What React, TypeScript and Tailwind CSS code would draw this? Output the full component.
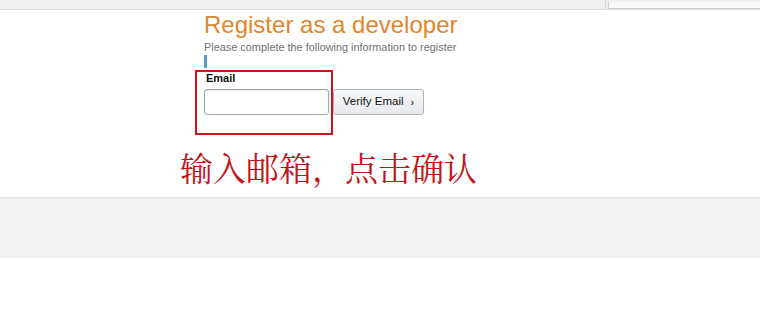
export default function App() {
  return (
    <div className="relative h-[331px] w-[760px] overflow-hidden bg-white font-['Liberation_Sans',Arial,sans-serif]">
      {/* browser-ish top strip */}
      <div className="flex h-[10px] items-end border-b border-[#dcdcdc] bg-[#efefee]">
        <div className="flex-1" />
        <div className="h-[9px] w-[6px] border-r border-[#d6d6d6]" />
        <div className="ml-[2px] h-[7px] w-[152px] border-l border-b border-[#d0d0d0] bg-[#f7f7f7]" />
      </div>

      <main className="pl-[204px] pt-[1px]">
        <h1 className="text-[24px] leading-[28px] text-[#e0862c]">Register as a developer</h1>
        <p className="mt-[2px] text-[10.9px] leading-[13px] text-[#6f6f6f]">
          Please complete the following information to register
        </p>
        <div className="mt-[1px] h-[13px] w-[3px] bg-[#5b9bd3]" />

        <form className="mt-[4px]">
          <label className="block pl-[2px] text-[11px] font-bold leading-[13px] text-[#111111]">Email</label>
          <div className="mt-[4px] flex items-center gap-[4px]">
            <input
              type="email"
              className="h-[26px] w-[125px] rounded-[3px] border border-[#a6a6a6] bg-white shadow-[inset_0_1px_0_rgba(0,0,0,0.07)] outline-none"
            />
            <button
              type="button"
              className="flex h-[26px] w-[91px] items-center justify-center gap-[7px] rounded-[3px] border border-[#adb1b8] bg-gradient-to-b from-[#f7f8fa] to-[#e7e9ec] text-[11.5px] text-[#111111]"
            >
              Verify Email
              <span className="text-[11px] font-bold text-[#555555]">›</span>
            </button>
          </div>
        </form>
      </main>

      <p className="mt-[33px] pl-[180px] font-['Noto_Serif_CJK_SC','Noto_Sans_CJK_SC',serif] text-[33px] leading-[38px] text-[#c0161b]">
        输入邮箱，点击确认
      </p>

      <div className="mt-[11px] h-[61px] border-t border-[#e4e4e2] bg-[#f0f1f0]" />

      {/* red annotation box */}
      <div className="absolute left-[195px] top-[70px] h-[65px] w-[138px] border-2 border-[#c8161b]" />
    </div>
  )
}
